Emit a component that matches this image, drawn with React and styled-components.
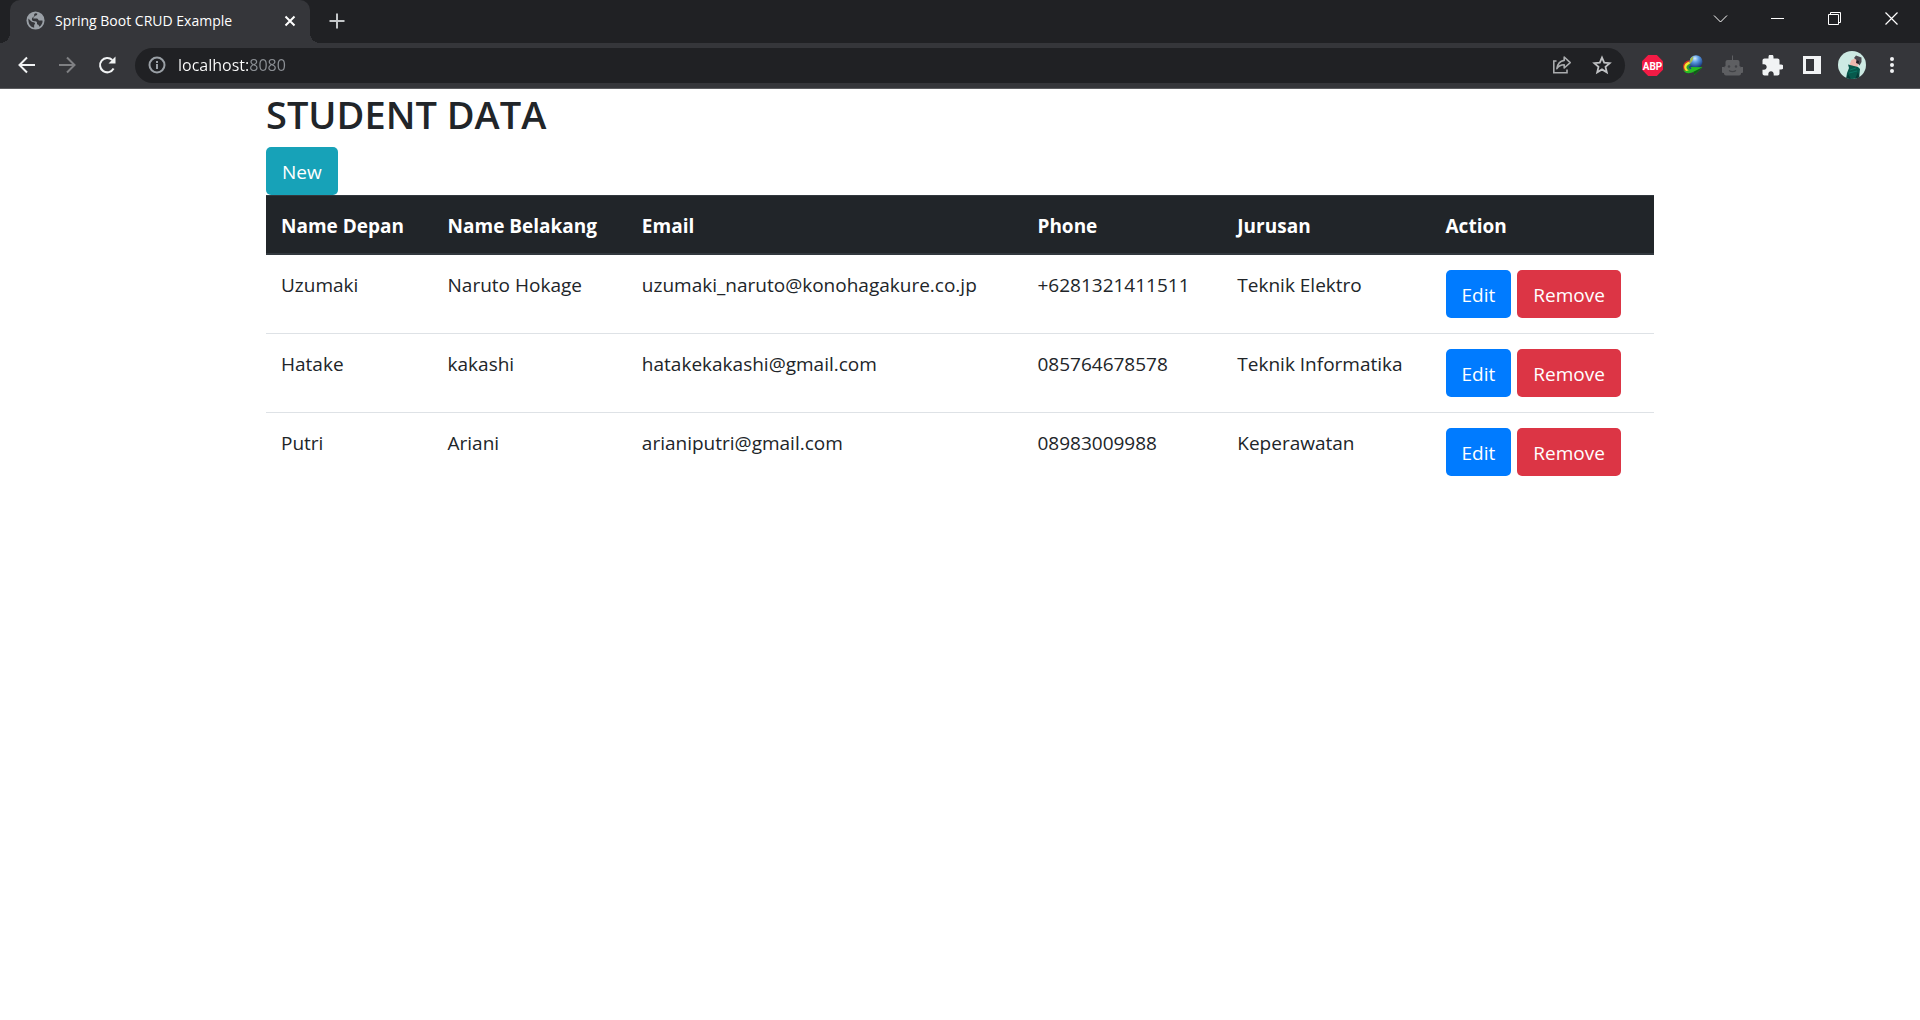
import React from "react";
import styled, { createGlobalStyle, css } from "styled-components";

const Global = createGlobalStyle`
  *, *::before, *::after { box-sizing: border-box; }
  body {
    margin: 0;
    background: #fff;
    color: #212529;
    font-family: "Open Sans", "Noto Sans", sans-serif;
    font-size: 19px;
    line-height: 30px;
  }
  button, input { font: inherit; }
`;

/* ---------- browser frame ---------- */

const TabStrip = styled.div`
  display: flex;
  align-items: flex-start;
  height: 43px;
  padding-left: 10px;
  background: #202124;
`;

const Tab = styled.div`
  position: relative;
  display: flex;
  align-items: center;
  width: 300px;
  height: 43px;
  padding: 0 10px 2px 16px;
  border-radius: 10px 10px 0 0;
  background: #35363a;
  color: #fff;

  &::before,
  &::after {
    content: "";
    position: absolute;
    bottom: 0;
    width: 10px;
    height: 10px;
  }
  &::before {
    right: 100%;
    background: radial-gradient(circle at 0 0, #202124 10px, #35363a 10px);
  }
  &::after {
    left: 100%;
    background: radial-gradient(circle at 100% 0, #202124 10px, #35363a 10px);
  }
`;

const TabTitle = styled.span`
  flex: 1;
  padding-left: 10px;
  font-size: 14px;
  white-space: nowrap;
`;

const iconButton = css`
  display: flex;
  align-items: center;
  justify-content: center;
  flex: none;
  padding: 0;
  border: 0;
  background: none;
`;

const TabButton = styled.button`
  ${iconButton}
  width: 20px;
  height: 20px;
  color: ${(p) => p.$color};
`;

const NewTab = styled(TabButton)`
  margin: 11px 0 0 17px;
`;

const WindowControls = styled.div`
  display: flex;
  margin-left: auto;
`;

const WindowButton = styled.button`
  ${iconButton}
  width: 57px;
  height: 37px;
  color: #fff;
`;

const Toolbar = styled.div`
  display: flex;
  align-items: center;
  height: 46px;
  padding: 0 8px 1px 7px;
  border-bottom: 1px solid #5b5c5f;
  background: #35363a;
`;

const ToolButton = styled.button`
  ${iconButton}
  width: 40px;
  height: 35px;
  color: ${(p) => p.$color || "#f1f3f4"};
`;

const AddressBar = styled.form`
  display: flex;
  align-items: center;
  flex: 1;
  height: 35px;
  margin: 0 7px 0 8px;
  padding: 0 3px 0 12px;
  border-radius: 18px;
  background: #202124;
  color: #9aa0a6;
`;

const AddressInput = styled.input`
  flex: 1;
  min-width: 0;
  height: 24px;
  margin-left: 11px;
  padding: 0;
  border: 0;
  outline: 0;
  background: linear-gradient(90deg, #fff 71px, #8c9095 71px);
  background-clip: text;
  -webkit-background-clip: text;
  color: transparent;
  font-size: 16px;
  line-height: 24px;
`;

/* ---------- page ---------- */

const Page = styled.main`
  width: 100%;
  max-width: 1388px;
  margin: 0 auto;
`;

const Title = styled.h2`
  margin: 0;
  padding: 1px 0 9px;
  font-size: 38px;
  font-weight: 600;
  line-height: 48px;
`;

const Button = styled.button`
  display: block;
  height: 48px;
  padding: 2px 16px 0;
  border: 0;
  border-radius: 5px;
  background: ${(p) => p.$color};
  color: #fff;
`;

const Actions = styled.div`
  display: flex;
  gap: 6px;
`;

const Table = styled.table`
  width: 100%;
  table-layout: fixed;
  border-spacing: 0;
`;

const Column = styled.col`
  width: ${(p) => p.$width};
`;

const HeadCell = styled.th`
  padding: 15px 15px 12px;
  border-top: 1px solid #32383e;
  border-bottom: 2px solid #32383e;
  background: #212529;
  color: #fff;
  font-weight: 700;
  text-align: left;
`;

const Cell = styled.td`
  padding: 15px;
  vertical-align: top;

  tr + tr > & {
    border-top: 1px solid #dee2e6;
  }
`;

/* ---------- drawings ---------- */

const Line = ({ size = 20, width = 2, children, ...rest }) => (
  <svg width={size} height={size} viewBox={`0 0 ${size} ${size}`} fill="none" stroke="currentColor" strokeWidth={width} aria-hidden="true" {...rest}>
    {children}
  </svg>
);

const Globe = () => (
  <svg width="19" height="19" viewBox="0 0 24 24" aria-hidden="true">
    <circle cx="12" cy="12" r="11.4" fill="#9aa0a6" />
    <path
      fill="#35363a"
      d="M3 9.6 6.8 13.4c1.4 1.1 4 .5 4.6 2.2.3 1.1-1.1 1.5-1.1 2.6v2.9C5.200 20.300 2.700 16 3 9.600ZM14.200 3c.3 1.700-.8 2.700-2.500 3-.9.2-1 1.900-2.200 2.100-.9.2-.5 1.300.5 1.500h3.800c1.400.1 1.500 1.900 2.600 2.400 1.500.4 3.300-.4 4.600.2-.1 3.400-1.700 6-4.200 7.600-.3-1.900-1.200-2.800-2.900-3 .2-2.300-.1-3.500-2.300-3.700-1.500-.2-3.400.1-4-1.600-.5-1.500.2-3.300 1.600-4 1.200-.6 1.300-1.200 1.100-2.300-.2-1.300.6-2 1.700-2.400Z"
    />
  </svg>
);

const Back = ({ flip }) => (
  <Line size={20} width={2}>
    <path d={flip ? "M2 10H17M10 2.500 17.500 10 10 17.500" : "M18 10H3M10 2.500 2.500 10 10 17.500"} />
  </Line>
);

const Reload = () => (
  <Line size={20}>
    <path d="M16.600 13.600A7.200 7.200 0 1 1 15.300 5" />
    <path d="M18.500 1.500V8.500H11.500Z" fill="currentColor" stroke="none" />
  </Line>
);

const Info = () => (
  <Line size={20}>
    <circle cx="10" cy="10" r="7.500" />
    <path d="M10 9V14M10 6V8" />
  </Line>
);

const Share = () => (
  <Line size={20} width={1.6}>
    <path d="M4.500 6H1.800V17.800H15V14.500" />
    <path d="M12.200 2 18.200 7.600 12.200 13V9.800C8.500 9.800 6.500 11 4.900 13.700 5.500 9.200 8 6 12.200 5.400Z" strokeLinejoin="round" />
  </Line>
);

const Star = () => (
  <Line size={20} width={1.8}>
    <path d="M10 2.600 12.200 7.700 17.700 8.200 13.500 11.900 14.800 17.300 10 14.400 5.200 17.300 6.500 11.900 2.300 8.200 7.800 7.700Z" />
  </Line>
);

const AdBlock = () => (
  <svg width="21" height="21" viewBox="0 0 21 21" aria-hidden="true">
    <path d="M6.200 0h8.600L21 6.200v8.600L14.800 21H6.200L0 14.800V6.200Z" fill="#f31b45" />
    <text x="10.500" y="14.500" textAnchor="middle" fill="#fff" fontFamily="Roboto, sans-serif" fontWeight="700" fontSize="10">ABP</text>
  </svg>
);

const Downloader = () => (
  <svg width="21" height="21" viewBox="0 0 21 21" aria-hidden="true">
    <defs>
      <radialGradient id="ball" cx="42%" cy="25%" r="72%">
        <stop offset="0" stopColor="#d2ecff" />
        <stop offset="0.400" stopColor="#5c9ce4" />
        <stop offset="1" stopColor="#17397d" />
      </radialGradient>
    </defs>
    <path d="M11 5C5 4.500 1 7.500 1 11.500 1 15 3.500 17.500 7.500 18L11 13Z" fill="#c9302a" />
    <path d="M11 6C6 6 2.200 8.500 2.200 12 2.200 15 4.500 17 8 17L11 13Z" fill="#f4e52e" />
    <path d="M11 8.500C7.500 8.500 4.500 10 4.500 12.500 4.500 14.500 6.500 15.500 8.500 15.500L11 13Z" fill="#2d9c3c" />
    <path d="M11 10C8.500 10 6.800 11 6.800 12.500L8.500 14.500 11 13Z" fill="#1d3f86" />
    <circle cx="14" cy="6.700" r="6.500" fill="url(#ball)" />
    <path d="M8.200 3.700 11.500 1.200 10.500 5.500 8.200 9Z" fill="#a9bd45" />
    <path d="M0.800 13C2 16.500 5 17 9.500 13.500L8.500 12 20.500 12.200 12.500 19.800 11.500 16.800C6.500 19.800 1.500 18 0.800 13Z" fill="#27bd24" />
    <path d="M11.500 16.800 20.500 12.200 12.500 19.800Z" fill="#0e5c17" />
  </svg>
);

const Robot = () => (
  <svg width="21" height="21" viewBox="0 0 21 21" fill="#5e5f62" aria-hidden="true">
    <path d="M10 0.500h1v5h-1z" />
    <rect x="3.500" y="5" width="14" height="8" rx="2" />
    <rect x="2" y="11" width="17" height="9.500" rx="2" />
    <path d="M0 12h2v6H1a1 1 0 0 1-1-1zM19 12h2v5a1 1 0 0 1-1 1h-1z" />
    <g fill="#414246">
      <circle cx="7" cy="11.500" r="1.200" />
      <circle cx="14" cy="11.500" r="1.200" />
    </g>
    <path d="M7 15.500Q10.500 17.800 14 15.500" fill="none" stroke="#414246" strokeWidth="1.300" />
  </svg>
);

const Puzzle = () => (
  <svg width="21" height="21" viewBox="1.500 1.500 21 21" fill="currentColor" aria-hidden="true">
    <path d="M20.500 11H19V7c0-1.100-.9-2-2-2h-4V3.500a2.500 2.500 0 0 0-5 0V5H4c-1.100 0-1.990.9-1.990 2v3.800H3.500c1.490 0 2.700 1.210 2.700 2.700s-1.210 2.700-2.700 2.700H2V20c0 1.100.9 2 2 2h3.800v-1.500c0-1.490 1.210-2.700 2.700-2.700s2.700 1.210 2.700 2.700V22H17c1.100 0 2-.9 2-2v-4h1.500a2.500 2.500 0 0 0 0-5Z" />
  </svg>
);

const SidePanel = () => (
  <svg width="20" height="20" viewBox="0 0 20 20" aria-hidden="true">
    <path d="M1 1h18v18H1z" fill="#f1f3f4" />
    <path d="M4 4h8v12H4z" fill="#35363a" />
  </svg>
);

const Avatar = () => (
  <svg width="28" height="28" viewBox="0 0 28 28" aria-hidden="true">
    <clipPath id="face">
      <circle cx="14" cy="14" r="14" />
    </clipPath>
    <g clipPath="url(#face)">
      <path d="M0 0h28v28H0z" fill="#cdeae3" />
      <path d="M11.500 13.500 13.500 9 17 7.500 21 11 19 17 14 16Z" fill="#eeb8ae" />
      <path d="M16 7 18 4.500 23.500 6.500 23.500 11 21.500 14.500 20 12.500 19 9.500Z" fill="#4c4a50" />
      <path d="M18.500 9 21 10 20.500 13 18 12Z" fill="#211c25" />
      <path d="M10 13.500 14 14.500 20 16 22 18 21 28H8L9 22 11 17Z" fill="#07594c" />
      <path d="M12 19 18 17M11 22 19 20" stroke="#0c7867" />
      <path d="M10 23 13 28H8ZM20 21 22 28H17Z" fill="#063b37" />
    </g>
  </svg>
);

const Dots = () => (
  <svg width="20" height="20" viewBox="0 0 20 20" fill="currentColor" aria-hidden="true">
    <circle cx="10" cy="4" r="2" />
    <circle cx="10" cy="10" r="2" />
    <circle cx="10" cy="16" r="2" />
  </svg>
);

const windowControls = [
  { label: "Search tabs", icon: <Line size={15} width={1}><path d="M1 4.500 7.500 11 14 4.500" /></Line> },
  { label: "Minimize", icon: <Line size={15} width={1}><path d="M1 7.500H14" /></Line> },
  { label: "Restore", icon: <Line size={15} width={1}><path d="M1.500 3.500H11.500V13.500H1.500ZM3.500 3.500V1.500H13.500V11.500H11.500" /></Line> },
  { label: "Close", icon: <Line size={15} width={1.2}><path d="M1.500 1.500 13.500 13.500M13.500 1.500 1.500 13.500" /></Line> },
];

const extensions = [
  { label: "Adblock Plus", icon: <AdBlock /> },
  { label: "Download manager", icon: <Downloader /> },
  { label: "Robot", icon: <Robot /> },
  { label: "Extensions", icon: <Puzzle /> },
  { label: "Side panel", icon: <SidePanel /> },
  { label: "Profile", icon: <Avatar /> },
  { label: "Menu", icon: <Dots /> },
];

const columns = [
  { label: "Name Depan", width: "12%" },
  { label: "Name Belakang", width: "14%" },
  { label: "Email", width: "28.5%" },
  { label: "Phone", width: "14.4%" },
  { label: "Jurusan", width: "15%" },
  { label: "Action", width: "16.1%" },
];

const students = [
  ["Uzumaki", "Naruto Hokage", "uzumaki_naruto@konohagakure.co.jp", "+6281321411511", "Teknik Elektro"],
  ["Hatake", "kakashi", "hatakekakashi@gmail.com", "085764678578", "Teknik Informatika"],
  ["Putri", "Ariani", "arianiputri@gmail.com", "08983009988", "Keperawatan"],
];

export default function App() {
  return (
    <>
      <Global />
      <header>
        <TabStrip>
          <Tab>
            <Globe />
            <TabTitle>Spring Boot CRUD Example</TabTitle>
            <TabButton type="button" aria-label="Close tab" $color="#fff">
              <Line size={12}><path d="M1.500 1.500 10.500 10.500M10.500 1.500 1.500 10.500" /></Line>
            </TabButton>
          </Tab>
          <NewTab type="button" aria-label="New tab" $color="#c4c7c9">
            <Line size={16}><path d="M8 0.500V15.500M0.500 8H15.500" /></Line>
          </NewTab>
          <WindowControls>
            {windowControls.map((c) => (
              <WindowButton key={c.label} type="button" aria-label={c.label}>{c.icon}</WindowButton>
            ))}
          </WindowControls>
        </TabStrip>
        <Toolbar>
          <ToolButton type="button" aria-label="Back"><Back /></ToolButton>
          <ToolButton type="button" aria-label="Forward" $color="#7f8083"><Back flip /></ToolButton>
          <ToolButton type="button" aria-label="Reload"><Reload /></ToolButton>
          <AddressBar onSubmit={(e) => e.preventDefault()}>
            <Info />
            <AddressInput type="text" aria-label="Address" defaultValue="localhost:8080" />
            <ToolButton type="button" aria-label="Share" $color="#aaacae"><Share /></ToolButton>
            <ToolButton type="button" aria-label="Bookmark" $color="#c0c2c4"><Star /></ToolButton>
          </AddressBar>
          {extensions.map((e) => (
            <ToolButton key={e.label} type="button" aria-label={e.label}>{e.icon}</ToolButton>
          ))}
        </Toolbar>
      </header>
      <Page>
        <Title>STUDENT DATA</Title>
        <Button type="button" $color="#17a2b8">New</Button>
        <Table>
          <colgroup>
            {columns.map((c) => <Column key={c.label} $width={c.width} />)}
          </colgroup>
          <thead>
            <tr>
              {columns.map((c) => <HeadCell key={c.label} scope="col">{c.label}</HeadCell>)}
            </tr>
          </thead>
          <tbody>
            {students.map((row) => (
              <tr key={row[0]}>
                {row.map((value) => <Cell key={value}>{value}</Cell>)}
                <Cell>
                  <Actions>
                    <Button type="button" $color="#007bff">Edit</Button>
                    <Button type="button" $color="#dc3545">Remove</Button>
                  </Actions>
                </Cell>
              </tr>
            ))}
          </tbody>
        </Table>
      </Page>
    </>
  );
}
